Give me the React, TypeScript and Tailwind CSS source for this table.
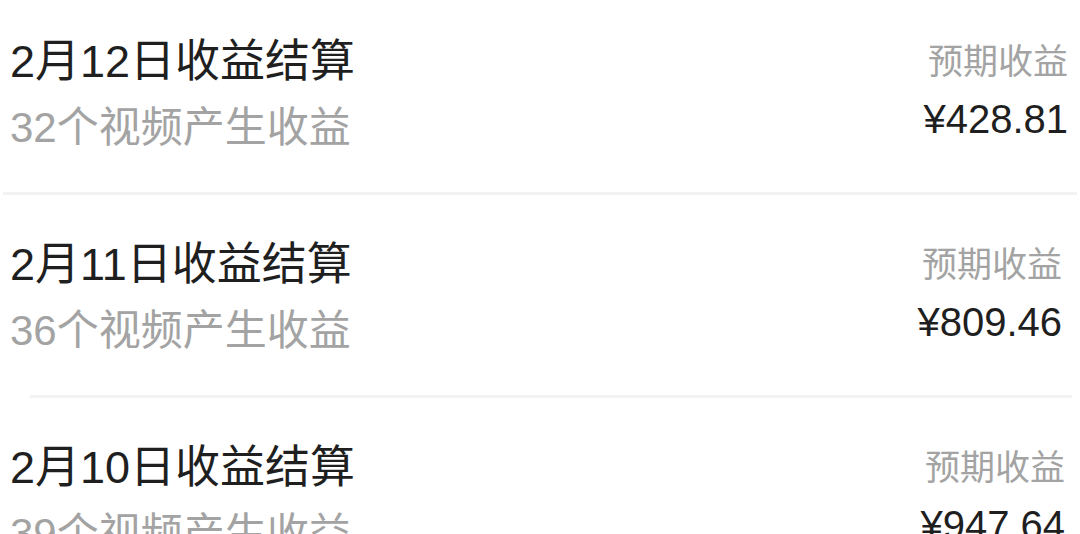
const rows = [
  { date: "2月12日收益结算", count: "32个视频产生收益", amount: "¥428.81", pad: "pt-[38px] pr-[12px]" },
  { date: "2月11日收益结算", count: "36个视频产生收益", amount: "¥809.46", pad: "pt-[46px] pr-[18px]" },
  { date: "2月10日收益结算", count: "39个视频产生收益", amount: "¥947.64", pad: "pt-[46px] pr-[15px]" },
];

export default function App() {
  return (
    <main className="h-[534px] w-[1080px] overflow-hidden bg-white font-['Liberation_Sans','Noto_Sans_CJK_SC',sans-serif]">
      {rows.map((r, i) => (
        <section key={r.date}>
          {i > 0 && (
            <div className={i === 1 ? "mx-[3px] h-[3px] bg-[#f2f2f2]" : "ml-[30px] mr-[8px] h-[3px] bg-[#f2f2f2]"} />
          )}
          <div className={"flex justify-between pb-[40px] pl-[10px] " + r.pad}>
            <div className="flex flex-col">
              <span className="text-[45px] leading-[48px] text-[#1f1f1f]">{r.date}</span>
              <span className="mt-[18px] text-[42px] leading-[48px] text-[#a3a3a3]">{r.count}</span>
            </div>
            <div className="flex flex-col items-end">
              <span className="mt-[4px] text-[35px] leading-[40px] text-[#a3a3a3]">预期收益</span>
              <span className="mt-[15px] text-[40px] leading-[44px] text-[#1f1f1f]">{r.amount}</span>
            </div>
          </div>
        </section>
      ))}
    </main>
  );
}
